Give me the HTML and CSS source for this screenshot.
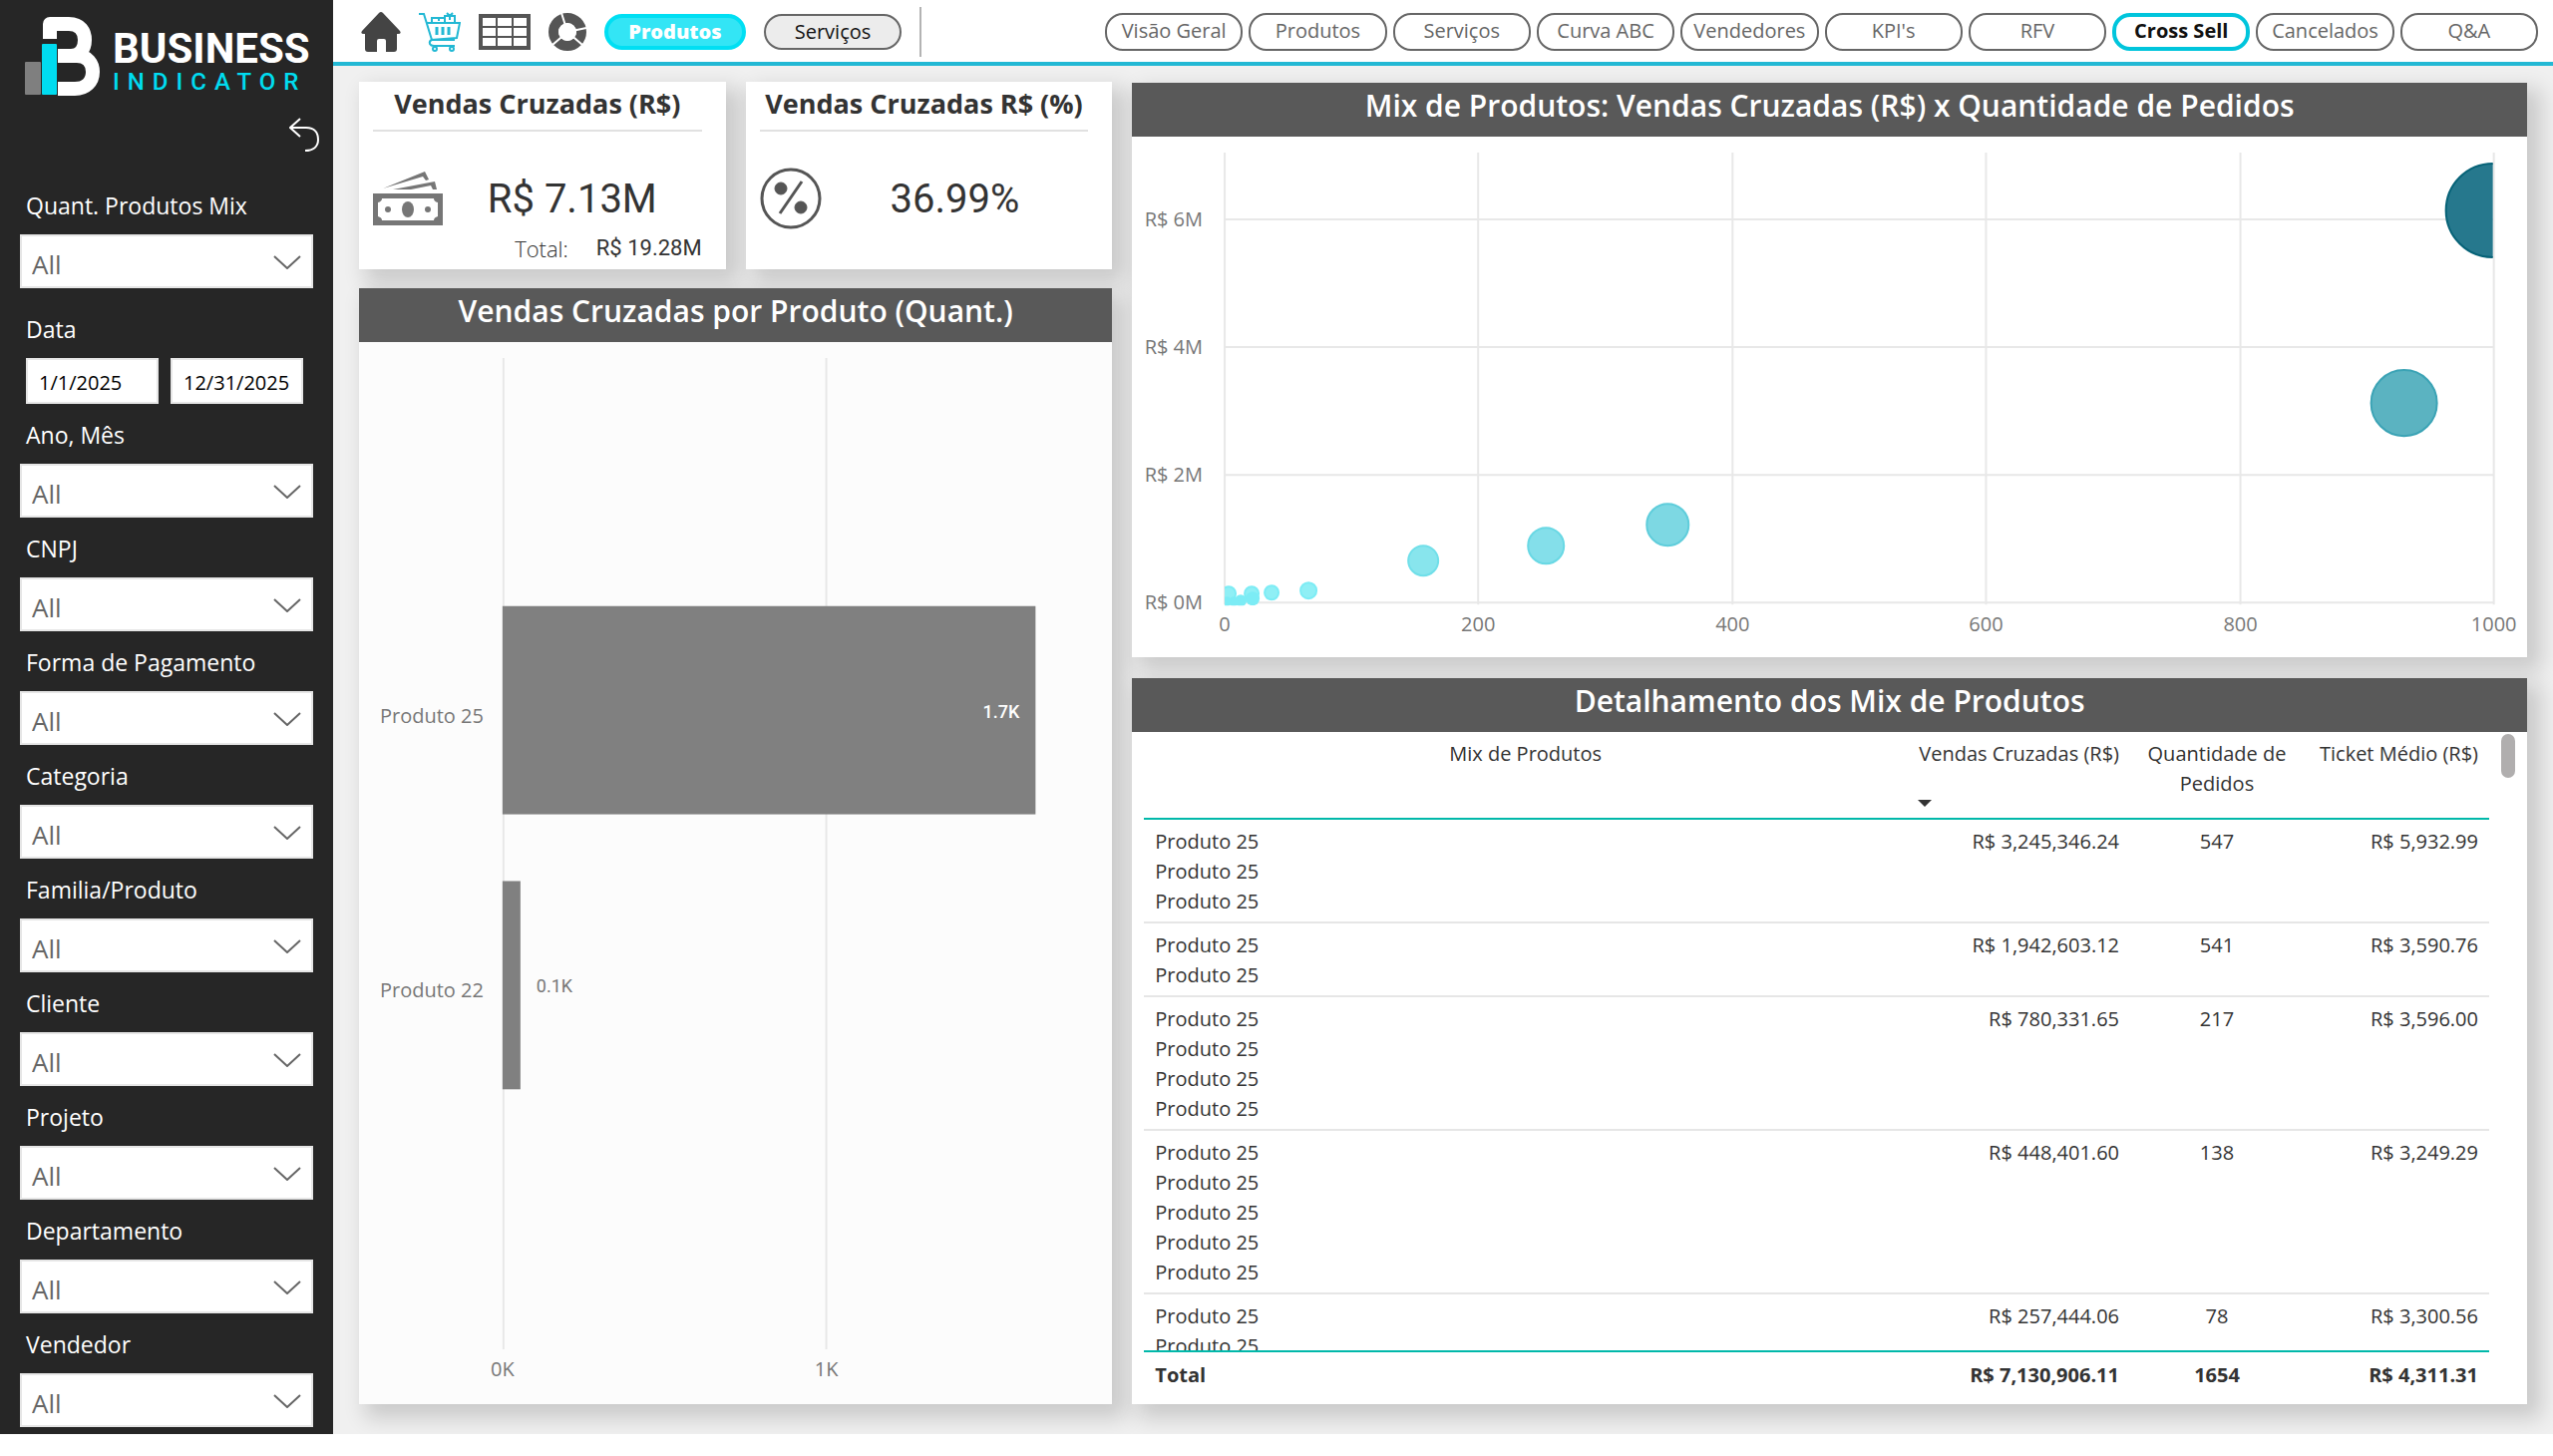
FILE: index.html
```html
<!DOCTYPE html>
<html lang="pt-BR">
<head>
    <meta charset="UTF-8">
    <meta name="viewport" content="width=device-width, initial-scale=1.0">
    <title>Business Indicator - Cross Sell</title>
    <link rel="stylesheet" href="styles.css">
</head>
<body>

<div class="page">
    <aside class="sidebar">
        <div class="logo">
            <svg class="logo-mark" viewBox="0 0 76 80" aria-hidden="true">
                <path d="M25 23V8H44C56 8 60 16 60 24C60 34 54 40 46 40H33M33 40H52C63 40 68 48 68 56C68 66 61 73 50 73H33" fill="none" stroke="#fff" stroke-width="14" stroke-linejoin="round"/>
                <rect x="0" y="46" width="16" height="33" rx="1" fill="#7f7f7f"/>
                <rect x="16" y="25" width="17" height="55" fill="#262626"/>
                <rect x="17" y="28" width="15" height="51" rx="1" fill="#00dcf0"/>
            </svg>
            <div class="logo-text">
                <span class="logo-name">BUSINESS</span>
                <span class="logo-sub">INDICATOR</span>
            </div>
        </div>

        <button class="back" type="button" aria-label="Voltar">
            <svg width="30" height="35" viewBox="0 0 30 35" fill="none" stroke="#fff" stroke-width="2">
                <path d="M11 1L1 10L11 19M1 10H17C26 10 29 16 29 22C29 29 24 33 16 33"/>
            </svg>
        </button>

        <form class="filters">
            <div class="filter filter-first">
                <label for="mix">Quant. Produtos Mix</label>
                <div class="select">
                    <select id="mix"><option>All</option></select>
                    <svg class="chevron" viewBox="0 0 28 14"><path d="M1 1L14 13L27 1"/></svg>
                </div>
            </div>
            <div class="filter">
                <label for="start">Data</label>
                <div class="dates">
                    <input type="text" id="start" value="1/1/2025">
                    <input type="text" id="end" value="12/31/2025" aria-label="Data final">
                </div>
            </div>
            <div class="filter">
                <label for="ano">Ano, Mês</label>
                <div class="select">
                    <select id="ano"><option>All</option></select>
                    <svg class="chevron" viewBox="0 0 28 14"><path d="M1 1L14 13L27 1"/></svg>
                </div>
            </div>
            <div class="filter">
                <label for="cnpj">CNPJ</label>
                <div class="select">
                    <select id="cnpj"><option>All</option></select>
                    <svg class="chevron" viewBox="0 0 28 14"><path d="M1 1L14 13L27 1"/></svg>
                </div>
            </div>
            <div class="filter">
                <label for="pagamento">Forma de Pagamento</label>
                <div class="select">
                    <select id="pagamento"><option>All</option></select>
                    <svg class="chevron" viewBox="0 0 28 14"><path d="M1 1L14 13L27 1"/></svg>
                </div>
            </div>
            <div class="filter">
                <label for="categoria">Categoria</label>
                <div class="select">
                    <select id="categoria"><option>All</option></select>
                    <svg class="chevron" viewBox="0 0 28 14"><path d="M1 1L14 13L27 1"/></svg>
                </div>
            </div>
            <div class="filter">
                <label for="familia">Familia/Produto</label>
                <div class="select">
                    <select id="familia"><option>All</option></select>
                    <svg class="chevron" viewBox="0 0 28 14"><path d="M1 1L14 13L27 1"/></svg>
                </div>
            </div>
            <div class="filter">
                <label for="cliente">Cliente</label>
                <div class="select">
                    <select id="cliente"><option>All</option></select>
                    <svg class="chevron" viewBox="0 0 28 14"><path d="M1 1L14 13L27 1"/></svg>
                </div>
            </div>
            <div class="filter">
                <label for="projeto">Projeto</label>
                <div class="select">
                    <select id="projeto"><option>All</option></select>
                    <svg class="chevron" viewBox="0 0 28 14"><path d="M1 1L14 13L27 1"/></svg>
                </div>
            </div>
            <div class="filter">
                <label for="departamento">Departamento</label>
                <div class="select">
                    <select id="departamento"><option>All</option></select>
                    <svg class="chevron" viewBox="0 0 28 14"><path d="M1 1L14 13L27 1"/></svg>
                </div>
            </div>
            <div class="filter">
                <label for="vendedor">Vendedor</label>
                <div class="select">
                    <select id="vendedor"><option>All</option></select>
                    <svg class="chevron" viewBox="0 0 28 14"><path d="M1 1L14 13L27 1"/></svg>
                </div>
            </div>
        </form>
    </aside>

    <div class="main">
        <header class="topbar">
            <button class="icon" type="button" aria-label="Início">
                <svg width="40" height="40" viewBox="0 0 40 40" fill="#444">
                    <path d="M18 1Q20-1 22 1L39 19Q41 22 37 22H36V37Q36 40 33 40H25V29Q25 27 23 27H18Q16 27 16 29V40H7Q4 40 4 37V22H3Q-1 22 1 19Z"/>
                </svg>
            </button>
            <button class="icon" type="button" aria-label="Carrinho">
                <svg width="42" height="40" viewBox="0 0 42 40" fill="none" stroke="#22b8d4" stroke-width="2">
                    <path d="M0 2H5L13 28H36M8 11H41L38 26L12 28"/>
                    <path d="M13 28Q10 29 11 32Q12 34 15 34H36"/>
                    <path d="M13 11V6H26V11M26 11V4H36V11M20 6V9M31 4V8M28 1L31 4L34 1"/>
                    <path d="M18 15V23M24 15V23M30 15V23" stroke-width="3"/>
                    <circle cx="16" cy="37" r="2"/>
                    <circle cx="33" cy="37" r="2"/>
                </svg>
            </button>
            <button class="icon" type="button" aria-label="Tabela">
                <svg width="52" height="36" viewBox="0 0 52 36" fill="none" stroke="#555">
                    <rect x="2" y="2" width="48" height="32" stroke-width="4"/>
                    <path d="M18 2V34M34 2V34M2 13H50M2 23H50" stroke-width="2"/>
                </svg>
            </button>
            <button class="icon" type="button" aria-label="Gráfico">
                <svg width="38" height="38" viewBox="0 0 38 38" fill="none">
                    <circle cx="19" cy="19" r="14" stroke="#555" stroke-width="10"/>
                    <path d="M19 19L13 0M19 19L38 15M19 19L34 32M19 19L4 32" stroke="#fff" stroke-width="2"/>
                    <circle cx="19" cy="19" r="9" fill="#fff"/>
                </svg>
            </button>
            <button class="tab tab-active" type="button">Produtos</button>
            <button class="tab" type="button">Serviços</button>
            <span class="divider"></span>
            <nav class="menu">
                <a href="#">Visão Geral</a>
                <a href="#">Produtos</a>
                <a href="#">Serviços</a>
                <a href="#">Curva ABC</a>
                <a href="#">Vendedores</a>
                <a href="#">KPI's</a>
                <a href="#">RFV</a>
                <a href="#" class="current">Cross Sell</a>
                <a href="#">Cancelados</a>
                <a href="#">Q&amp;A</a>
            </nav>
        </header>

        <main class="content">
            <div class="column-left">
                <div class="cards">
                    <section class="card">
                        <h2>Vendas Cruzadas (R$)</h2>
                        <div class="card-body">
                            <svg width="70" height="54" viewBox="0 0 70 54" fill="#767676">
                                <path d="M10 17L52 0L56 8L53 9L50 5Z"/>
                                <path d="M20 18L62 10L64 18H60L58 14L38 18Z"/>
                                <path fill-rule="evenodd" d="M0 22H70V54H0ZM9 27Q9 30 5 31V45Q9 46 9 49H61Q61 46 65 45V31Q61 30 61 27Z"/>
                                <ellipse cx="35" cy="38" rx="6" ry="8"/>
                                <circle cx="15" cy="38" r="3"/>
                                <circle cx="55" cy="38" r="3"/>
                            </svg>
                            <span class="value">R$ 7.13M</span>
                        </div>
                        <p class="card-total"><span>Total:</span> <strong>R$ 19.28M</strong></p>
                    </section>
                    <section class="card">
                        <h2>Vendas Cruzadas R$ (%)</h2>
                        <div class="card-body">
                            <svg width="62" height="62" viewBox="0 0 62 62" fill="#555" stroke="#555">
                                <circle cx="31" cy="31" r="29" fill="none" stroke-width="3"/>
                                <circle cx="21" cy="21" r="6"/>
                                <circle cx="41" cy="40" r="6"/>
                                <path d="M20 46L42 14" stroke-width="3"/>
                            </svg>
                            <span class="value">36.99%</span>
                        </div>
                    </section>
                </div>

                <section class="panel panel-bars">
                    <h2>Vendas Cruzadas por Produto (Quant.)</h2>
                    <svg class="chart" viewBox="0 0 756 1064">
                        <path class="grid" d="M145 16V1011M469 16V1011"/>
                        <rect class="bar" x="144" y="265" width="535" height="209"/>
                        <rect class="bar" x="144" y="541" width="18" height="209"/>
                        <text x="125" y="382" text-anchor="end">Produto 25</text>
                        <text x="125" y="658" text-anchor="end">Produto 22</text>
                        <text class="data data-inside" x="663" y="377" text-anchor="end">1.7K</text>
                        <text class="data" x="178" y="653">0.1K</text>
                        <text x="144" y="1038" text-anchor="middle">0K</text>
                        <text x="469" y="1038" text-anchor="middle">1K</text>
                    </svg>
                </section>
            </div>

            <div class="column-right">
                <section class="panel">
                    <h2>Mix de Produtos: Vendas Cruzadas (R$) x Quantidade de Pedidos</h2>
                    <svg class="chart" viewBox="0 0 1398 522">
                        <defs>
                            <clipPath id="plot"><rect x="93" y="16" width="1271" height="454"/></clipPath>
                        </defs>
                        <path class="grid" d="M93 16V469M347 16V469M602 16V469M856 16V469M1111 16V469M1365 16V469"/>
                        <path class="grid" d="M92 83H1365M92 211H1365M92 339H1365M92 467H1365"/>
                        <text x="71" y="90" text-anchor="end">R$ 6M</text>
                        <text x="71" y="218" text-anchor="end">R$ 4M</text>
                        <text x="71" y="346" text-anchor="end">R$ 2M</text>
                        <text x="71" y="474" text-anchor="end">R$ 0M</text>
                        <text x="93" y="496" text-anchor="middle">0</text>
                        <text x="347" y="496" text-anchor="middle">200</text>
                        <text x="602" y="496" text-anchor="middle">400</text>
                        <text x="856" y="496" text-anchor="middle">600</text>
                        <text x="1111" y="496" text-anchor="middle">800</text>
                        <text x="1365" y="496" text-anchor="middle">1000</text>
                        <g clip-path="url(#plot)" stroke-width="2">
                            <circle cx="1364" cy="74" r="47" fill="#26788d" stroke="#066277"/>
                            <circle cx="1275" cy="267" r="33" fill="#5bb3c1" stroke="#3ba3b5"/>
                            <circle cx="537" cy="389" r="21" fill="#7dd8e3" stroke="#5fcddb"/>
                            <circle cx="415" cy="410" r="18" fill="#84dfea" stroke="#69d8e4"/>
                            <circle cx="292" cy="425" r="15" fill="#88e5ed" stroke="#70dfe9"/>
                            <g fill="#8feff5" stroke="#7cecf5">
                                <circle cx="177" cy="455" r="8"/>
                                <circle cx="140" cy="457" r="7"/>
                                <circle cx="120" cy="458" r="7"/>
                                <circle cx="97" cy="458" r="7"/>
                            </g>
                            <g fill="#7cecf5">
                                <circle cx="121" cy="463" r="7"/>
                                <circle cx="109" cy="465" r="6"/>
                                <circle cx="102" cy="466" r="5"/>
                                <circle cx="95" cy="466" r="5"/>
                            </g>
                        </g>
                    </svg>
                </section>

                <section class="panel panel-table">
                    <h2>Detalhamento dos Mix de Produtos</h2>
                    <div class="table-area">
                        <div class="table-scroll">
                            <table>
                                <colgroup>
                                    <col class="col-mix">
                                    <col class="col-sales">
                                    <col class="col-orders">
                                    <col class="col-ticket">
                                </colgroup>
                                <thead>
                                    <tr>
                                        <th>Mix de Produtos</th>
                                        <th class="num">Vendas Cruzadas (R$)<span class="sort"></span></th>
                                        <th>Quantidade de Pedidos</th>
                                        <th class="num">Ticket Médio (R$)</th>
                                    </tr>
                                </thead>
                                <tbody>
                                    <tr>
                                        <td>Produto 25<br>Produto 25<br>Produto 25</td>
                                        <td class="num">R$ 3,245,346.24</td>
                                        <td class="center">547</td>
                                        <td class="num">R$ 5,932.99</td>
                                    </tr>
                                    <tr>
                                        <td>Produto 25<br>Produto 25</td>
                                        <td class="num">R$ 1,942,603.12</td>
                                        <td class="center">541</td>
                                        <td class="num">R$ 3,590.76</td>
                                    </tr>
                                    <tr>
                                        <td>Produto 25<br>Produto 25<br>Produto 25<br>Produto 25</td>
                                        <td class="num">R$ 780,331.65</td>
                                        <td class="center">217</td>
                                        <td class="num">R$ 3,596.00</td>
                                    </tr>
                                    <tr>
                                        <td>Produto 25<br>Produto 25<br>Produto 25<br>Produto 25<br>Produto 25</td>
                                        <td class="num">R$ 448,401.60</td>
                                        <td class="center">138</td>
                                        <td class="num">R$ 3,249.29</td>
                                    </tr>
                                    <tr>
                                        <td>Produto 25<br>Produto 25</td>
                                        <td class="num">R$ 257,444.06</td>
                                        <td class="center">78</td>
                                        <td class="num">R$ 3,300.56</td>
                                    </tr>
                                </tbody>
                                <tfoot>
                                    <tr>
                                        <td>Total</td>
                                        <td class="num">R$ 7,130,906.11</td>
                                        <td class="center">1654</td>
                                        <td class="num">R$ 4,311.31</td>
                                    </tr>
                                </tfoot>
                            </table>
                        </div>
                        <div class="scroll-thumb"></div>
                    </div>
                </section>
            </div>
        </main>
    </div>
</div>

</body>
</html>
```
FILE: styles.css
```css
* {
    box-sizing: border-box;
}

body {
    margin: 0;
    background-color: #fff;
    color: #333;
    font-family: "Open Sans", "Noto Sans", sans-serif;
    font-size: 20px;
}

h2, p {
    margin: 0;
}

button, input, select {
    font-family: inherit;
}

.page {
    display: flex;
    height: calc(100vh - 22px);
    min-height: 1438px;
}

/* Sidebar */
.sidebar {
    width: 334px;
    flex-shrink: 0;
    padding: 16px 20px 0;
    background-color: #262626;
    color: #fff;
}

.logo {
    display: flex;
    gap: 12px;
    padding-left: 5px;
}

.logo-mark {
    width: 76px;
    height: 80px;
}

.logo-text {
    display: flex;
    flex-direction: column;
    padding-top: 13px;
    font-family: Roboto, sans-serif;
}

.logo-name {
    font-size: 42px;
    font-weight: 700;
    line-height: 40px;
}

.logo-sub {
    color: #00dcf0;
    font-size: 24px;
    font-weight: 500;
    line-height: 26px;
    letter-spacing: 8px;
}

.back {
    display: block;
    margin: 22px -6px 38px auto;
    padding: 0;
    border: none;
    background: none;
    line-height: 0;
    cursor: pointer;
}

.filters {
    display: flex;
    flex-direction: column;
    gap: 16px;
}

.filter-first {
    margin-bottom: 10px;
}

.filter label {
    display: block;
    margin-bottom: 14px;
    padding-left: 6px;
    font-size: 23px;
    line-height: 30px;
}

.select {
    position: relative;
}

.select select {
    appearance: none;
    display: block;
    width: 100%;
    height: 54px;
    padding: 6px 10px 0;
    border: 2px solid #e6e6e6;
    border-radius: 0;
    background-color: #fff;
    color: #666;
    font-size: 26px;
}

.chevron {
    position: absolute;
    top: 21px;
    right: 12px;
    width: 28px;
    height: 14px;
    fill: none;
    stroke: #666;
    stroke-width: 2;
    pointer-events: none;
}

.dates {
    display: flex;
    gap: 12px;
    padding: 0 10px 0 6px;
}

.dates input {
    flex: 1;
    min-width: 0;
    height: 46px;
    padding: 2px 0 0 11px;
    border: 2px solid #e6e6e6;
    color: #000;
    font-size: 20px;
}

/* Top bar */
.main {
    display: flex;
    flex: 1;
    flex-direction: column;
    min-width: 0;
    background-color: #f0f0f0;
}

.topbar {
    display: flex;
    align-items: center;
    gap: 18px;
    height: 66px;
    padding: 2px 15px 0 28px;
    border-bottom: 4px solid #22b8d4;
    background-color: #fff;
}

.icon {
    padding: 0;
    border: none;
    background: none;
    line-height: 0;
    cursor: pointer;
}

.tab {
    width: 138px;
    height: 36px;
    padding: 0;
    border: 2px solid #666;
    border-radius: 18px;
    background-color: #ececec;
    color: #111;
    font-size: 20px;
    line-height: 30px;
    cursor: pointer;
}

.tab-active {
    width: 142px;
    border: 4px solid #00dff3;
    background-color: #33e5f5;
    color: #fff;
    font-weight: 800;
    line-height: 26px;
}

.divider {
    width: 2px;
    height: 50px;
    background-color: #b3b3b3;
}

.menu {
    display: grid;
    flex: 1;
    grid-auto-columns: 1fr;
    grid-auto-flow: column;
    gap: 6px;
    margin-left: 166px;
}

.menu a {
    height: 38px;
    border: 2px solid #666;
    border-radius: 18px;
    color: #666;
    font-size: 20px;
    line-height: 32px;
    text-align: center;
    text-decoration: none;
    white-space: nowrap;
}

.menu .current {
    border: 4px solid #00c5dc;
    color: #111;
    font-weight: 700;
    line-height: 28px;
}

/* Content */
.content {
    display: grid;
    flex: 1;
    grid-template-columns: 27fr 50fr;
    gap: 20px;
    min-height: 0;
    padding: 16px 26px 30px;
}

.column-left, .column-right {
    display: flex;
    flex-direction: column;
    min-width: 0;
    min-height: 0;
}

.column-left {
    gap: 19px;
}

.column-right {
    gap: 21px;
    padding-top: 1px;
}

.cards {
    display: grid;
    grid-template-columns: 1fr 1fr;
    gap: 20px;
}

.card, .panel {
    background-color: #fff;
    box-shadow: 10px 10px 20px 4px rgba(0, 0, 0, 0.16);
}

.card {
    height: 188px;
    padding: 0 24px 0 14px;
}

.card h2 {
    border-bottom: 2px solid #e1e1e1;
    font-size: 27px;
    font-weight: 700;
    line-height: 44px;
    padding-bottom: 4px;
    text-align: center;
    white-space: nowrap;
}

.card-body {
    display: flex;
    align-items: center;
    height: 100px;
    padding-top: 34px;
}

.value {
    flex: 1;
    color: #333;
    font-family: Roboto, sans-serif;
    font-size: 40px;
    text-align: center;
}

.card-total {
    display: flex;
    justify-content: flex-end;
    align-items: center;
    gap: 28px;
    font-size: 22px;
    line-height: 34px;
}

.card-total span {
    font-weight: 300;
}

.card-total strong {
    font-family: Roboto, sans-serif;
    font-weight: 400;
}

.panel h2 {
    height: 54px;
    background-color: #595959;
    color: #fff;
    font-size: 30px;
    font-weight: 600;
    line-height: 46px;
    text-align: center;
}

.panel-bars {
    flex: 1;
    min-height: 0;
    background-color: #fcfcfc;
}

/* Charts */
.chart {
    display: block;
    width: 100%;
    fill: #777;
    font-size: 20px;
}

.grid {
    fill: none;
    stroke: #e8e8e8;
    stroke-width: 2;
}

.bar {
    fill: #808080;
}

.data {
    font-family: Roboto, sans-serif;
    font-size: 18px;
}

.data-inside {
    fill: #fff;
    font-weight: 500;
}

/* Table */
.panel-table {
    display: flex;
    flex: 1;
    flex-direction: column;
    min-height: 0;
}

.panel-table h2 {
    flex-shrink: 0;
}

.table-area {
    display: flex;
    flex: 1;
    gap: 12px;
    min-height: 0;
    padding: 0 12px;
}

.table-scroll {
    flex: 1;
    overflow: auto;
    scrollbar-width: none;
}

.scroll-thumb {
    width: 14px;
    height: 44px;
    margin-top: 2px;
    border-radius: 7px;
    background-color: #b0aeae;
}

table {
    width: 100%;
    border-spacing: 0;
    table-layout: fixed;
    font-size: 20px;
    line-height: 30px;
}

.col-sales {
    width: 224px;
}

.col-orders {
    width: 174px;
}

.col-ticket {
    width: 186px;
}

th, td {
    padding: 7px 11px 5px;
    border-bottom: 2px solid #e6e6e6;
    text-align: left;
    vertical-align: top;
}

th {
    position: sticky;
    top: 0;
    height: 88px;
    border-bottom-color: #01b8aa;
    background-color: #fff;
    font-weight: 400;
    text-align: center;
}

.num {
    text-align: right;
    white-space: nowrap;
}

.center {
    text-align: center;
}

/* Descending order marker */
.sort {
    display: block;
    width: 0;
    margin-top: 31px;
    border: 7px solid transparent;
    border-top-color: #333;
    border-bottom: none;
}

tfoot td {
    position: sticky;
    bottom: 0;
    padding: 8px 11px 14px;
    border-top: 2px solid #01b8aa;
    border-bottom: none;
    background-color: #fff;
    font-weight: 700;
}
```
